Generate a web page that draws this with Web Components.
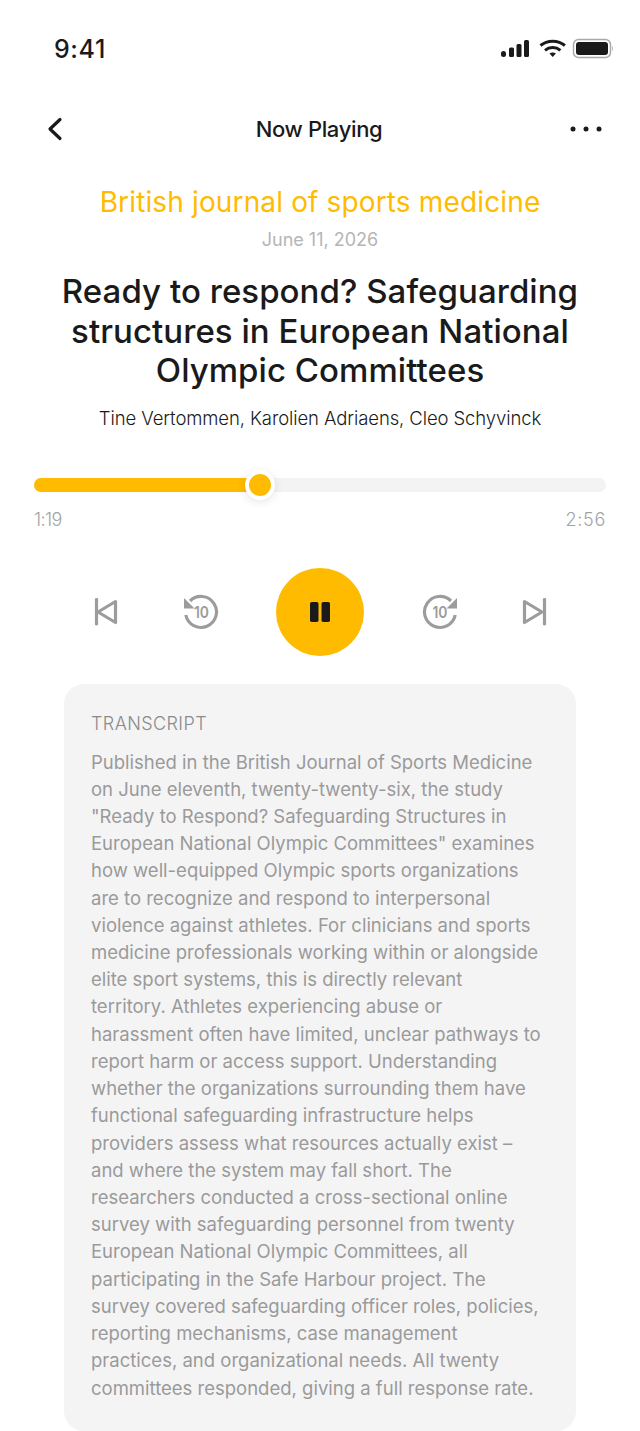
<!DOCTYPE html>
<html><head><meta charset="utf-8"><style>
html,body{margin:0;padding:0;background:#fff}
body{width:640px;height:1431px;overflow:hidden;font-family:Inter,"Liberation Sans",sans-serif;color:#1a1a1a}
</style></head><body>
<np-screen>
<status-bar></status-bar>
<nav-bar title="Now Playing"></nav-bar>
<track-head journal="British journal of sports medicine" date="June 11, 2026" authors="Tine Vertommen, Karolien Adriaens, Cleo Schyvinck">Ready to respond? Safeguarding<br>structures in European National<br>Olympic Committees</track-head>
<progress-bar pct="39.5" now="1:19" total="2:56"></progress-bar>
<player-controls></player-controls>
<transcript-card>Published in the British Journal of Sports Medicine<br>on June eleventh, twenty-twenty-six, the study<br>"Ready to Respond? Safeguarding Structures in<br>European National Olympic Committees" examines<br>how well-equipped Olympic sports organizations<br>are to recognize and respond to interpersonal<br>violence against athletes. For clinicians and sports<br>medicine professionals working within or alongside<br>elite sport systems, this is directly relevant<br>territory. Athletes experiencing abuse or<br>harassment often have limited, unclear pathways to<br>report harm or access support. Understanding<br>whether the organizations surrounding them have<br>functional safeguarding infrastructure helps<br>providers assess what resources actually exist –<br>and where the system may fall short. The<br>researchers conducted a cross-sectional online<br>survey with safeguarding personnel from twenty<br>European National Olympic Committees, all<br>participating in the Safe Harbour project. The<br>survey covered safeguarding officer roles, policies,<br>reporting mechanisms, case management<br>practices, and organizational needs. All twenty<br>committees responded, giving a full response rate.</transcript-card>
</np-screen>
<script>
function def(name,html){customElements.define(name,class extends HTMLElement{constructor(){super();this.attachShadow({mode:'open'}).innerHTML=typeof html==='function'?html(this):html;}});}
def('np-screen',`<style>:host{display:flex;flex-direction:column;width:640px;height:1431px}</style><slot></slot>`);
def('status-bar',`<style>:host{display:flex;align-items:center;justify-content:space-between;height:98px;box-sizing:border-box;padding:0 27px 0 54px}
.t{font-size:25px;font-weight:500;letter-spacing:.6px;line-height:30px}
svg{display:block}</style><span class="t">9:41</span>
<svg width="113" height="22" viewBox="0 0 113 22"><g fill="#1a1a1a"><rect x="1" y="13" width="5" height="6" rx="2.5"/><rect x="9" y="9.500" width="5" height="9.500" rx="1.500"/><rect x="16.500" y="6" width="5" height="13" rx="1.500"/><rect x="24" y="2" width="5" height="17" rx="1.500"/>
<path d="M49.500 15.500l3.200 3.600 3.200-3.600c-1.800-1.500-4.600-1.500-6.400 0z"/></g><g fill="none" stroke="#1a1a1a" stroke-width="3"><path d="M40.500 7.500c6.800-5.800 17.600-5.800 24.400 0"/><path d="M45 12.300c4.400-3.600 11-3.600 15.400 0"/></g>
<rect x="74.500" y="1.500" width="37" height="18" rx="5" fill="none" stroke="#a9a9a9" stroke-width="1.500" transform="translate(-1 0)"/><rect x="76" y="4" width="32" height="13" rx="3" fill="#1a1a1a"/><path d="M112 8v5c1-.4 1-4.600 0-5z" fill="#a9a9a9"/></svg>`);
def('nav-bar',e=>`<style>:host{display:flex;align-items:center;justify-content:space-between;height:62px;padding:0 38px 0 46px;box-sizing:border-box}
.t{font-size:22px;font-weight:500;letter-spacing:-.35px;margin-right:2px}svg{display:block}.s{display:flex}.l{width:24px}.r{width:32px}</style>
<span class="s l"><svg width="18" height="24" viewBox="0 0 18 24"><path d="M14 2.500L4 12l10 9.500" fill="none" stroke="#1a1a1a" stroke-width="3.200" stroke-linecap="round" stroke-linejoin="round"/></svg></span>
<span class="t">${e.getAttribute('title')}</span>
<span class="s r"><svg width="32" height="6" viewBox="0 0 32 6"><circle cx="3" cy="3" r="2.500" fill="#1a1a1a"/><circle cx="16" cy="3" r="2.500" fill="#1a1a1a"/><circle cx="29" cy="3" r="2.500" fill="#1a1a1a"/></svg></span>`);
def('track-head',e=>`<style>:host{display:flex;flex-direction:column;align-items:center;text-align:center}
.j{font-size:28px;line-height:36px;color:#ffbb00;letter-spacing:.14px;margin-top:24px}
.d{font-size:18px;line-height:24px;color:#b5b5b5;margin-top:8px}
h1{font-size:33px;line-height:39.500px;font-weight:500;margin:20px 0 0;letter-spacing:.05px;white-space:nowrap}
.a{font-size:18.500px;line-height:24px;font-weight:300;margin-top:15px;letter-spacing:-.1px;color:#1a1a1a}</style>
<div class="j">${e.getAttribute('journal')}</div><div class="d">${e.getAttribute('date')}</div><h1><slot></slot></h1><div class="a">${e.getAttribute('authors')}</div>`);
def('progress-bar',e=>`<style>:host{display:block;margin:48px 34px 0}
.tr{position:relative;height:14px;border-radius:7px;background:#f3f3f3}
.f{height:100%;width:${e.getAttribute('pct')}%;background:#ffbb00;border-radius:7px}
.k{position:absolute;left:${e.getAttribute('pct')}%;top:50%;width:22px;height:22px;border:4px solid #fff;border-radius:50%;background:#ffbb00;transform:translate(-50%,-50%);box-shadow:0 2px 10px rgba(0,0,0,.1)}
.l{display:flex;justify-content:space-between;font-size:18px;line-height:24px;font-weight:300;color:#a3a3a3;margin-top:16px}
.l span:first-child{letter-spacing:-.6px}.l span:last-child{letter-spacing:.7px}</style>
<div class="tr"><div class="f"></div><div class="k"></div></div><div class="l"><span>${e.getAttribute('now')}</span><span>${e.getAttribute('total')}</span></div>`);
def('player-controls',`<style>:host{display:flex;align-items:center;justify-content:center;margin-top:36px;height:88px}
svg{display:block}.g{fill:none;stroke:#9c9c9c;stroke-width:3.200}
.p{width:88px;height:88px;border-radius:50%;background:#ffbb00;display:flex;align-items:center;justify-content:center;margin:0 58px 0 57px}
text{font:600 16.500px Inter,sans-serif;fill:#9c9c9c}</style>
<svg style="margin-right:64px" width="26" height="28" viewBox="0 0 26 28"><path class="g" d="M3.500 1.500V26" stroke-linecap="round"/><path class="g" d="M22.500 3.500L5 14l17.500 10.500z" stroke-linejoin="round"/></svg>
<svg width="36" height="36" viewBox="0 0 36 36"><path class="g" d="M7 7A15.500 15.500 0 1 1 2.800 21"/><path d="M1 4V14.500H11.500z" fill="#9c9c9c"/><text x="11" y="24" textLength="15" lengthAdjust="spacingAndGlyphs">10</text></svg>
<span class="p"><svg width="22" height="22" viewBox="0 0 22 22" fill="#1a1a1a"><rect x="1" y="1" width="8.500" height="20" rx="1.800"/><rect x="12.500" y="1" width="8.500" height="20" rx="1.800"/></svg></span>
<svg width="36" height="36" viewBox="0 0 36 36"><path class="g" d="M29 7A15.500 15.500 0 1 0 33.200 21"/><path d="M35 4V14.500H24.500z" fill="#9c9c9c"/><text x="10.500" y="24" textLength="15" lengthAdjust="spacingAndGlyphs">10</text></svg>
<svg style="margin-left:63px" width="26" height="28" viewBox="0 0 26 28"><path class="g" d="M23.500 1.500V26" stroke-linecap="round"/><path class="g" d="M3.500 3.500L21 14 3.500 24.500z" stroke-linejoin="round"/></svg>`);
def('transcript-card',`<style>:host{display:block;margin:28px 64px 0;padding:27px 27px 29px;background:#f4f4f5;border-radius:20px;color:#9a9a9a}
.h{font-size:18px;line-height:26px;letter-spacing:.4px;font-weight:300;margin-bottom:12px;color:#8a8a8a}
.b{font-size:18.500px;line-height:27.220px;letter-spacing:0;white-space:nowrap}</style><div class="h">TRANSCRIPT</div><div class="b"><slot></slot></div>`);
</script></body></html>
